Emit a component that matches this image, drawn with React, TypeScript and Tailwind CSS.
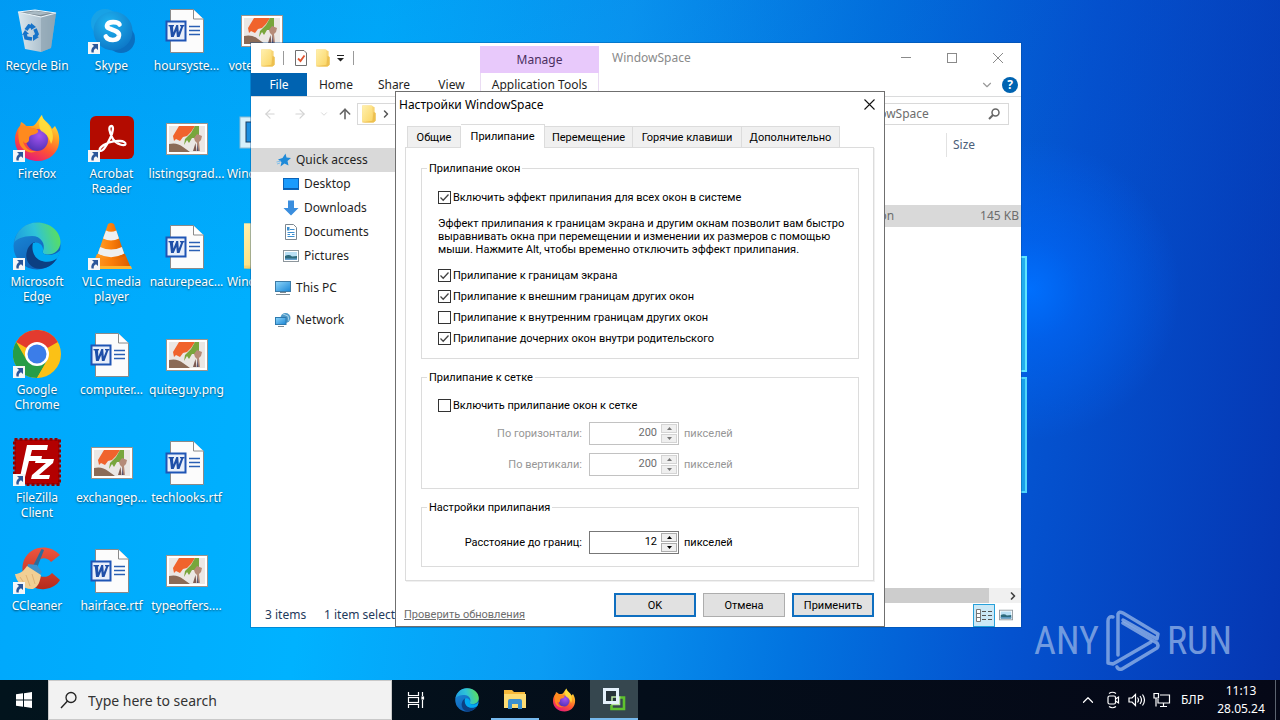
import { useState, type ReactNode } from "react";
import { ChevronDown, ChevronRight, ChevronUp, ArrowLeft, ArrowRight, ArrowUp } from "lucide-react";

/* ---------- shared gradients ---------- */

function GradientDefs() {
  return (
    <svg width="0" height="0" className="absolute" aria-hidden="true">
      <defs>
        <linearGradient id="ffBody" x1="0.8" y1="0" x2="0.3" y2="1">
          <stop offset="0" stopColor="#fff04a" />
          <stop offset="0.35" stopColor="#ffa424" />
          <stop offset="0.65" stopColor="#ff5532" />
          <stop offset="1" stopColor="#e3187c" />
        </linearGradient>
        <radialGradient id="ffCore" cx="0.6" cy="0.3" r="0.8">
          <stop offset="0" stopColor="#a453f0" />
          <stop offset="1" stopColor="#4a2fb0" />
        </radialGradient>
        <linearGradient id="edgeTop" x1="0" y1="0.6" x2="1" y2="0.4">
          <stop offset="0" stopColor="#1c9de0" />
          <stop offset="0.5" stopColor="#2fc3d8" />
          <stop offset="1" stopColor="#5be05a" />
        </linearGradient>
        <linearGradient id="edgeBody" x1="0" y1="0" x2="0.6" y2="1">
          <stop offset="0" stopColor="#1b8fdc" />
          <stop offset="1" stopColor="#0f5db4" />
        </linearGradient>
        <radialGradient id="skypeFill" cx="0.4" cy="0.3" r="0.8">
          <stop offset="0" stopColor="#1fb3f0" />
          <stop offset="1" stopColor="#0b73c4" />
        </radialGradient>
        <linearGradient id="vlcFill" x1="0" y1="0" x2="1" y2="0">
          <stop offset="0" stopColor="#ffa12b" />
          <stop offset="0.5" stopColor="#fb7f0a" />
          <stop offset="1" stopColor="#d95c00" />
        </linearGradient>
        <linearGradient id="binFill" x1="0" y1="0" x2="1" y2="0">
          <stop offset="0" stopColor="#dbe7ee" />
          <stop offset="0.55" stopColor="#b4c6d2" />
          <stop offset="1" stopColor="#8fa9ba" />
        </linearGradient>
        <linearGradient id="ccFill" x1="0" y1="0" x2="0" y2="1">
          <stop offset="0" stopColor="#f0553f" />
          <stop offset="1" stopColor="#b52a1c" />
        </linearGradient>
        <linearGradient id="folderFill" x1="0" y1="0" x2="1" y2="1">
          <stop offset="0" stopColor="#fff0ae" />
          <stop offset="1" stopColor="#fbd768" />
        </linearGradient>
        <linearGradient id="screenFill" x1="0" y1="0" x2="1" y2="1">
          <stop offset="0" stopColor="#8fd6fa" />
          <stop offset="1" stopColor="#1a86d6" />
        </linearGradient>
      </defs>
    </svg>
  );
}

/* ---------- desktop icons, drawn on a 48 unit grid ---------- */

const RecycleBinIcon = () => (
  <svg viewBox="0 0 48 48" className="size-12">
    <path d="M5 6 L43 7 L38 42 L28 46 L12 43 Z" fill="url(#binFill)" />
    <path d="M28 11 L43 7 L38 42 L28 46 Z" fill="#8ea3b1" opacity="0.65" />
    <path d="M5 6 L22 4 L43 7 L28 11 Z" fill="#7e8d97" stroke="#eef6fb" strokeWidth="1.2" />
    <path d="M11 7 L22 5 L37 7 L27 9 Z" fill="#a9bac4" />
    <g fill="none" stroke="#1673c9" strokeWidth="3.6">
      <path d="M13 24 L16 20 L20 21" />
      <path d="M22 23 L24 28 L22 31" />
      <path d="M19 33 L13 32 L12 28" />
    </g>
    <path d="M18 17 L23 21 L18 24 Z M26 31 L20 35 L20 29 Z M9 29 L12 24 L16 28 Z" fill="#1673c9" />
  </svg>
);

const SkypeIcon = () => (
  <svg viewBox="0 0 48 48" className="size-12">
    <circle cx="33" cy="33" r="14" fill="#0a6fc0" />
    <circle cx="17" cy="17" r="14" fill="#18a2e6" />
    <circle cx="25" cy="25" r="19.5" fill="url(#skypeFill)" />
    <path
      d="M31.500 18.500 C30 15.500 20 14.800 19 19.500 C18.200 24.500 31.500 23 31 29.500 C30.300 35.500 20 35 17.800 30.500"
      fill="none"
      stroke="#fff"
      strokeWidth="4.600"
      strokeLinecap="round"
    />
  </svg>
);

const WordIcon = () => (
  <svg viewBox="0 0 48 48" className="size-12">
    <path d="M7.500 3.500 H30 L40.500 13.500 V46.500 H7.500 Z" fill="#fcfcfc" stroke="#8a8a8a" />
    <path d="M30.500 3.500 V13 H40.500" fill="#fff" stroke="#8a8a8a" />
    <path d="M26 20.500 H37 M26 24.500 H37 M26 28.500 H37" stroke="#2a5fb4" strokeWidth="1.300" />
    <rect x="2.500" y="14.500" width="21" height="21" fill="#1f55b5" />
    <rect x="4.500" y="16.500" width="17" height="17" fill="#e9effa" />
    <path
      d="M5.500 19 H11 V20.200 L10 20.500 L10.400 26.500 L13.300 19 H15.200 L15.800 26.500 L18.200 20.500 L17 20.200 V19 H21.500 V20.200 L20.300 20.600 L16.500 31 H13.900 L13.300 25 L10.700 31 H8 L6.800 20.600 L5.500 20.200 Z"
      fill="#1f4fa8"
    />
  </svg>
);

const PictureFileIcon = () => (
  <svg viewBox="0 0 48 48" className="size-12">
    <rect x="3.500" y="9.500" width="41" height="31" fill="#fff" stroke="#9b938c" />
    <rect x="6" y="12" width="36" height="26" fill="#ebe7e4" />
    <path d="M10 22 L13 17 L16 12 H32 L28 18 L24 22 L20 23 L17 27 L13 25 L11 27 Z" fill="#f0632c" />
    <path d="M32 12 H36 V21 L33 24 L29 24 L26 29 L24 26 L21 31 L22 25 L28 19 Z" fill="#78a63c" />
    <path d="M6 30 Q14 28 20 33 L27 38 H6 Z" fill="#8b6b57" />
    <path d="M31 24 L34 20 L39 22 L38 26 L36 28 L37 37 H35 L34 29 L32 27 Z" fill="#b58b78" />
    <path d="M30 37 L32.500 29 L33.500 37 Z" fill="#7d5a52" />
    <path d="M34 37 L34.500 29 L35.500 37 Z" fill="#49486a" />
  </svg>
);

const FirefoxIcon = ({ className = "size-12" }: { className?: string }) => (
  <svg viewBox="0 0 48 48" className={className}>
    <path
      d="M29 1 C29 6 36 8 39 15 L42 12 C45 17 47 22 46 29 C45 39 36 47 25 47 C12 47 2 38 2 26 C2 20 4 15 7 12 L8 8 C10 9 12 10 13 12 L19 12 C23 12 25 5 29 1 Z"
      fill="url(#ffBody)"
    />
    <circle cx="24" cy="26" r="11" fill="url(#ffCore)" />
    <path
      d="M7 12 C11 11 16 12 19 14 C23 14 26 16 25 18 C23 21 19 20 17 22 C15 24 17 26 15 28 C13 30 11 29 10 27 C12 36 19 38 24 37 C17 41 7 36 6 27 C5 20 5 16 7 12 Z"
      fill="#ff8a1e"
    />
    <path d="M29 1 C29 6 35 9 38 15 C41 21 40 27 38 30 C36 22 32 19 28 17 C25 12 26 5 29 1 Z" fill="#ffe03c" opacity="0.85" />
  </svg>
);

const AcrobatIcon = () => (
  <svg viewBox="0 0 48 48" className="size-12">
    <rect x="2" y="2" width="44" height="43" rx="6" fill="#b30b00" />
    <path
      d="M23.500 12 C20 12 21 18 25 25 C28 30 37 33 37.500 30 C38 26.500 28 26 21 28.500 C14 31 10.500 35 12 36.500 C14.500 38.500 19 31 22.500 23.500 C25 18 26 12 23.500 12 Z"
      fill="none"
      stroke="#fff"
      strokeWidth="2.300"
      strokeLinejoin="round"
    />
  </svg>
);

const EdgeIcon = ({ className = "size-12" }: { className?: string }) => (
  <svg viewBox="0 0 48 48" className={className}>
    <circle cx="24" cy="24" r="23.500" fill="url(#edgeBody)" />
    <path
      d="M1 21 C3 8 13 0.500 24 0.500 C38 0.500 47.500 10 47.500 20 C47.500 28 41 32.500 35 32.500 C31 32.500 29 31 30 29 C33 22 28 14 19 14 C10 14 3 17 1 21 Z"
      fill="url(#edgeTop)"
    />
    <path
      d="M44 36.500 C39 45 29 48.500 22 46 C14 43 12 35 14 29 C15 25 18 21 22 20 C18 27 21 39 33 39.500 C38 39.500 41 38 44 36.500 Z"
      fill="#0c3f82"
    />
    <path d="M20 21 C18 28 21 38 31 39.500 C37 40.300 41 38.500 44.500 36 C46 33 47 31 47.300 28 C44 32 39 33.500 34 33 C29 32 29.500 30 30 28 C30.500 23 25 19 20 21 Z" fill="#00a9f2" />
  </svg>
);

const VlcIcon = () => (
  <svg viewBox="0 0 48 48" className="size-12">
    <path d="M9 32 H37 L43 46 H3 Z" fill="url(#vlcFill)" />
    <path d="M3 44 H43 L44 47 H3 Z" fill="#ffb52e" />
    <path d="M20 2 Q23 0 26 2 L37 34 Q23 41 9 34 Z" fill="url(#vlcFill)" />
    <path d="M18 8.500 Q23 11 28.300 8.500 L31 16.500 Q23 20.500 15 16.500 Z" fill="#eef0f1" />
    <path d="M12.200 25 Q23 30 33.900 25 L36.200 31.500 Q23 39 9.900 31.500 Z" fill="#eef0f1" />
  </svg>
);

const ChromeIcon = () => (
  <svg viewBox="0 0 48 48" className="size-12">
    <circle cx="24" cy="24" r="24" fill="#fbc116" />
    <path d="M24 24 L3.200 12 A24 24 0 0 1 44.800 12 Z" fill="#e33b2e" />
    <path d="M3.200 12 A24 24 0 0 0 24 48 L34.400 30 L24 24 L13.600 30 Z" fill="#269d47" />
    <path d="M24 48 L34.400 30 L40 24 A24 24 0 0 1 24 48 Z" fill="#fbc116" />
    <circle cx="24" cy="24" r="12" fill="#fff" />
    <circle cx="24" cy="24" r="9.500" fill="#3b7de9" />
  </svg>
);

const FileZillaIcon = () => (
  <svg viewBox="0 0 48 48" className="size-12">
    <rect x="1.500" y="1.500" width="45" height="45" fill="#b30000" stroke="#8e0000" strokeWidth="3" strokeDasharray="3 2" />
    <path d="M14 7 H35 L34 12 H19 L17.500 18 H29 L28 23 H16 L12 39 H7 Z" fill="#fff" />
    <path d="M23 21 H41 L40 25 L26 37 H37 L36 41 H18 L19 37 L33 25 H22 Z" fill="#fff" />
  </svg>
);

const CCleanerIcon = () => (
  <svg viewBox="0 0 48 48" className="size-12">
    <path d="M47 9 C36 -3 17 0 11 14 C5 30 17 45 32 43 C39 42 44 39 47 34 L39 27 C33 34 22 31 22 22 C22 12 33 9 38 16 Z" fill="url(#ccFill)" />
    <path d="M28.500 3 L31 4 L24 22 L20 20 Z" fill="#2c6c9c" />
    <path d="M15 18 L24 19 L29 26 L26 30 L14 22 Z" fill="#3f92cc" />
    <path d="M14 20 C10 26 6 28 2 28 C3 35 10 44 20 43 C25 41 27 36 28 29 Z" fill="#f2cf94" />
    <path d="M7 31 L11 37 M13 29 L17 40 M19 28 L22 38" stroke="#dfb274" fill="none" />
  </svg>
);

const ProgramIcon = () => (
  <svg viewBox="0 0 48 48" className="size-12">
    <rect x="2" y="3" width="44" height="31" fill="#d5f0fb" stroke="#8bb9cf" />
    <rect x="8" y="8" width="32" height="20" fill="#1c8fe0" stroke="#1b3e63" />
  </svg>
);

const FolderIcon = ({ className = "size-12" }: { className?: string }) => (
  <svg viewBox="0 0 16 16" className={className}>
    <path d="M2 0.500 H10 L13 2 V14.500 L12 15.500 H2 Z" fill="#f7d474" />
    <path d="M2 0.500 H11 V14.500 H2 Z" fill="url(#folderFill)" />
    <path d="M12 6 L14 7 V14 L12 15.500 H2 L11 14 Z" fill="#edc04f" />
  </svg>
);

function ShortcutBadge() {
  return (
    <svg viewBox="0 0 12 12" className="absolute bottom-0 left-0 size-3">
      <rect width="12" height="12" fill="#f4f6f8" />
      <path d="M4 2 H10 V8 L8 6.300 C6 7.300 5.500 8.500 5.800 10.500 H3.500 C2.800 7.500 4 5.500 6 4 Z" fill="#2b579a" />
    </svg>
  );
}

type DesktopItem = { label: string; icon: ReactNode; shortcut?: boolean } | null;

const desktopItems: DesktopItem[] = [
  { label: "Recycle Bin", icon: <RecycleBinIcon /> },
  { label: "Skype", icon: <SkypeIcon />, shortcut: true },
  { label: "hoursyste...", icon: <WordIcon /> },
  { label: "voteguest...", icon: <PictureFileIcon /> },
  { label: "Firefox", icon: <FirefoxIcon />, shortcut: true },
  { label: "Acrobat Reader", icon: <AcrobatIcon />, shortcut: true },
  { label: "listingsgrad...", icon: <PictureFileIcon /> },
  { label: "WindowSp...", icon: <ProgramIcon /> },
  { label: "Microsoft Edge", icon: <EdgeIcon />, shortcut: true },
  { label: "VLC media player", icon: <VlcIcon />, shortcut: true },
  { label: "naturepeac...", icon: <WordIcon /> },
  { label: "WindowSp...", icon: <FolderIcon /> },
  { label: "Google Chrome", icon: <ChromeIcon />, shortcut: true },
  { label: "computer...", icon: <WordIcon /> },
  { label: "quiteguy.png", icon: <PictureFileIcon /> },
  null,
  { label: "FileZilla Client", icon: <FileZillaIcon />, shortcut: true },
  { label: "exchangep...", icon: <PictureFileIcon /> },
  { label: "techlooks.rtf", icon: <WordIcon /> },
  null,
  { label: "CCleaner", icon: <CCleanerIcon />, shortcut: true },
  { label: "hairface.rtf", icon: <WordIcon /> },
  { label: "typeoffers....", icon: <PictureFileIcon /> },
  null,
];

function DesktopIcons() {
  return (
    <ul className="grid w-max auto-rows-[108px] grid-cols-[74px_75px_75px_75px] pt-1.5">
      {desktopItems.map((item, i) =>
        item ? (
          <li key={i} className="flex flex-col items-center gap-1 text-center">
            <div className="relative">
              {item.icon}
              {item.shortcut && <ShortcutBadge />}
            </div>
            <span className="px-0.5 text-[12px] leading-[15px] text-white [text-shadow:0_1px_2px_rgba(0,0,0,0.6)]">
              {item.label}
            </span>
          </li>
        ) : (
          <li key={i} aria-hidden="true" />
        ),
      )}
    </ul>
  );
}

/* ---------- Explorer window ---------- */

const DocCheckIcon = () => (
  <svg viewBox="0 0 14 16" className="h-4 w-3.5">
    <path d="M1.500 0.500 H10 L12.500 3 V15.500 H1.500 Z" fill="#fff" stroke="#6f6f6f" />
    <path d="M4 8.500 L6.500 11 L10.500 5.500" fill="none" stroke="#e0532e" strokeWidth="1.800" />
  </svg>
);

const StarIcon = () => (
  <svg viewBox="0 0 16 16" className="size-4">
    <path d="M9.500 1.500 L10.500 5.500 L15 6 L11.500 9 L12.500 13.500 L8.500 11.500 L4.500 14.500 L5.500 10 L2 7.500 L6.500 6 Z" fill="#1f8ad8" />
    <path d="M0.500 10 L5 9 M1 12 L4 11" stroke="#7dbdea" />
  </svg>
);
const DesktopSmallIcon = () => (
  <svg viewBox="0 0 16 16" className="size-4">
    <rect x="0.500" y="2.500" width="15" height="11" fill="#1a9bfc" stroke="#0b63b8" />
    <path d="M1 12.500 H15" stroke="#0a5cad" />
  </svg>
);
const DownloadsIcon = () => (
  <svg viewBox="0 0 16 16" className="size-4">
    <path d="M5 0.500 H11 V8 H15.500 L8 15.500 L0.500 8 H5 Z" fill="#3b8ede" />
  </svg>
);
const DocumentsIcon = () => (
  <svg viewBox="0 0 16 16" className="size-4">
    <path d="M2.500 0.500 H10.500 L13.500 3.500 V15.500 H2.500 Z" fill="#fff" stroke="#7c8790" />
    <path d="M7 5.500 H11.500 M4.500 8.500 H11.500 M4.500 10.500 H7 M9 10.500 H11.500 M4.500 12.500 H11.500" stroke="#3d8fd0" />
    <rect x="4" y="3" width="2.500" height="3.500" fill="#3d8fd0" />
  </svg>
);
const PicturesIcon = ({ className = "size-4" }: { className?: string }) => (
  <svg viewBox="0 0 16 16" className={className}>
    <rect x="0.500" y="2.500" width="15" height="11" fill="#fff" stroke="#8d969c" />
    <rect x="2" y="4" width="12" height="8" fill="#b9dff4" />
    <path d="M2 8 Q6 6 9 8.500 L14 8 V12 H2 Z" fill="#2d6a7c" />
    <path d="M2 10.500 H14 V12 H2 Z" fill="#64a0cf" />
  </svg>
);
const ThisPcIcon = () => (
  <svg viewBox="0 0 16 16" className="size-4">
    <rect x="0.500" y="1.500" width="15" height="10" fill="url(#screenFill)" stroke="#3d7ba6" />
    <path d="M5 12.500 H11 M1 14.500 H15" stroke="#7d8b94" />
  </svg>
);
const NetworkIcon = () => (
  <svg viewBox="0 0 16 16" className="size-4">
    <circle cx="10.500" cy="6" r="5" fill="#4f9ac8" />
    <path d="M8 2 L13 4 L14 9" fill="none" stroke="#a9d3ea" />
    <rect x="0.500" y="5.500" width="10.500" height="7" fill="url(#screenFill)" stroke="#2d79ae" />
    <path d="M3 14.500 H9" stroke="#7d8b94" />
  </svg>
);

const quickAccess = [
  { label: "Desktop", icon: <DesktopSmallIcon /> },
  { label: "Downloads", icon: <DownloadsIcon /> },
  { label: "Documents", icon: <DocumentsIcon /> },
  { label: "Pictures", icon: <PicturesIcon /> },
];

const windowButton = "flex h-[30px] w-[46px] items-center justify-center text-[#8a8a8a]";

function ExplorerTitle() {
  return (
    <div className="grid grid-cols-[229px_119px_1fr]">
      <div className="flex h-[30px] items-center pl-2">
        <FolderIcon className="size-[18px]" />
        <span className="ml-1.5 h-3.5 w-px bg-[#9a9a9a]" />
        <button className="ml-2.5" aria-label="Properties">
          <DocCheckIcon />
        </button>
        <button className="ml-1.5" aria-label="New folder">
          <FolderIcon className="size-[18px]" />
        </button>
        <button className="ml-1" aria-label="Customize toolbar">
          <svg viewBox="0 0 9 7" className="h-[7px] w-[9px]">
            <path d="M1 0.500 H8" stroke="#222" />
            <path d="M1 3 H8 L4.500 6.500 Z" fill="#222" />
          </svg>
        </button>
        <span className="ml-2 h-3.5 w-px bg-[#9a9a9a]" />
      </div>
      <div className="mt-[3px] flex items-center justify-center bg-[#e8c9fb] text-[#4b2f5f]">Manage</div>
      <div className="flex items-center">
        <span className="flex-1 pl-[13px] text-[#8a8a8a]">WindowSpace</span>
        <button className={windowButton} aria-label="Minimize">
          <svg viewBox="0 0 10 10" className="size-2.5">
            <path d="M0 4.500 H10" stroke="currentColor" />
          </svg>
        </button>
        <button className={windowButton} aria-label="Maximize">
          <svg viewBox="0 0 10 10" className="size-2.5">
            <rect x="0.500" y="0.500" width="9" height="9" fill="none" stroke="currentColor" />
          </svg>
        </button>
        <button className={windowButton} aria-label="Close window">
          <svg viewBox="0 0 10 10" className="size-2.5">
            <path d="M0 0 L10 10 M10 0 L0 10" stroke="currentColor" />
          </svg>
        </button>
      </div>
    </div>
  );
}

function ExplorerWindow() {
  return (
    <section
      aria-label="WindowSpace folder"
      className="absolute top-[43px] left-[251px] flex h-[584px] w-[770px] flex-col bg-white text-[12px] leading-4 text-[#1f1f1f] shadow-[0_0_0_1px_rgba(0,70,140,0.35)]"
    >
      <ExplorerTitle />
      <div className="flex h-6 items-stretch border-b border-[#dadbdc]">
        <button className="w-14 bg-[#0063b1] text-white">File</button>
        <button className="w-[58px]">Home</button>
        <button className="w-[58px]">Share</button>
        <button className="w-[57px]">View</button>
        <button className="w-[119px] border-x border-[#eadcf3]">Application Tools</button>
        <div className="flex flex-1 items-center justify-end gap-2 pr-[3px]">
          <ChevronDown className="size-3.5 text-[#9a9a9a]" strokeWidth={2} />
          <button className="size-4 rounded-full bg-[#0063b1] text-[12px] leading-4 font-bold text-white" aria-label="Help">
            ?
          </button>
        </div>
      </div>

      <div className="flex h-[34px] items-center pr-3">
        <div className="flex w-[106px] items-center pl-3 text-[#d3d3d3]">
          <ArrowLeft className="size-3.5" />
          <ArrowRight className="ml-4 size-3.5" />
          <ChevronDown className="ml-3 size-2.5" />
          <ArrowUp className="ml-2 size-4 text-[#666]" strokeWidth={2.4} />
        </div>
        <div className="flex h-[22px] flex-1 items-center border border-[#d9d9d9] pl-0.5">
          <FolderIcon className="size-[18px]" />
          <ChevronRight className="ml-0.5 size-3 text-[#555]" strokeWidth={3} />
        </div>
        <label className="ml-3 flex h-[22px] w-[207px] items-center border border-[#d9d9d9] pr-2">
          <input
            aria-label="Search WindowSpace"
            placeholder="Search WindowSpace"
            className="min-w-0 flex-1 pl-1.5 outline-none placeholder:text-[#6d6d6d]"
          />
          <svg viewBox="0 0 12 12" className="size-3 text-[#666]">
            <circle cx="7.500" cy="4.500" r="3.500" fill="none" stroke="currentColor" strokeWidth="1.500" />
            <path d="M5 7 L1 11" stroke="currentColor" strokeWidth="2" />
          </svg>
        </label>
      </div>

      <div className="flex min-h-0 flex-1">
        <nav className="w-36 pt-[17px]" aria-label="Folders">
          <a href="#quick" className="flex h-6 items-center gap-1 bg-[#d9d9d9] pl-[25px]">
            <StarIcon />
            Quick access
          </a>
          {quickAccess.map((entry) => (
            <a key={entry.label} href={`#${entry.label}`} className="flex h-6 items-center gap-[5px] pl-8">
              {entry.icon}
              {entry.label}
            </a>
          ))}
          <a href="#pc" className="mt-2 flex h-6 items-center gap-[5px] pl-6">
            <ThisPcIcon />
            This PC
          </a>
          <a href="#network" className="mt-2 flex h-6 items-center gap-[5px] pl-6">
            <NetworkIcon />
            Network
          </a>
        </nav>

        <div className="flex flex-1 flex-col">
          <table className="w-full table-fixed border-collapse text-[#6d6d6d]">
            <colgroup>
              <col />
              <col className="w-[120px]" />
              <col className="w-[75px]" />
            </colgroup>
            <thead>
              <tr className="h-[30px] text-left align-top text-[#4c607a]">
                <th />
                <th />
                <th className="pt-0.5 font-normal">
                  <div className="flex h-6 items-center border-l border-[#e2e2e2] pl-1.5">Size</div>
                </th>
              </tr>
            </thead>
            <tbody>
              <tr className="h-[22px]">
                <td colSpan={3} />
              </tr>
              <tr className="h-[22px]">
                <td colSpan={3} />
              </tr>
              <tr className="h-[22px] bg-[#d9d9d9]">
                <td />
                <td className="pl-[5px]">Application</td>
                <td className="pr-0.5 text-right">145 KB</td>
              </tr>
            </tbody>
          </table>
          <div className="mt-auto flex h-[15px] items-center bg-[#f0f0f0]">
            <div className="h-full flex-1 bg-[#cdcdcd]" />
            <button className="flex h-full w-8 items-center justify-end pr-0.5" aria-label="Scroll right">
              <ChevronRight className="size-3 text-[#404040]" strokeWidth={3.5} />
            </button>
          </div>
        </div>
      </div>

      <footer className="flex h-6 items-center text-[#1e395b]">
        <span className="w-[73px] pl-3.5">3 items</span>
        <span className="flex-1">1 item selected</span>
        <button className="flex h-[23px] w-[22px] items-center justify-center border border-[#26a0da] bg-[#cbe8f6]" aria-label="Details">
          <svg viewBox="0 0 16 13" className="h-[13px] w-4">
            <path d="M0.500 0.500 H4.500 V12.500 H0.500 Z M0.500 4.500 H4.500 M0.500 8.500 H4.500" fill="#fff" stroke="#777" />
            <path d="M6 2.500 H10 M12 2.500 H16 M6 6.500 H10 M12 6.500 H16 M6 10.500 H10 M12 10.500 H16" stroke="#555" />
          </svg>
        </button>
        <button className="flex h-[23px] w-[26px] items-center pl-1" aria-label="Large icons">
          <PicturesIcon className="size-3.5" />
        </button>
      </footer>
    </section>
  );
}

/* ---------- settings dialog ---------- */

const dialogTabs = [
  { label: "Общие", width: "w-[54px]" },
  { label: "Прилипание", width: "w-[84px]" },
  { label: "Перемещение", width: "w-[88px]" },
  { label: "Горячие клавиши", width: "w-[109px]" },
  { label: "Дополнительно", width: "w-[98px]" },
];

function Check({ label, initial = false }: { label: string; initial?: boolean }) {
  const [checked, setChecked] = useState(initial);
  return (
    <label className="flex h-[13px] w-max items-center gap-0.5">
      <span className="grid size-[13px]">
        <input
          type="checkbox"
          checked={checked}
          onChange={(e) => setChecked(e.target.checked)}
          className="col-start-1 row-start-1 size-[13px] appearance-none border border-[#333] bg-white"
        />
        {checked && (
          <svg viewBox="0 0 13 13" className="pointer-events-none col-start-1 row-start-1 size-[13px]">
            <path d="M2.500 6.500 L5.200 9.200 L10.500 3.500" fill="none" stroke="#444" strokeWidth="1.300" />
          </svg>
        )}
      </span>
      {label}
    </label>
  );
}

function NumberRow({ id, label, initial, disabled = false }: { id: string; label: string; initial: number; disabled?: boolean }) {
  const [value, setValue] = useState(initial);
  const box = disabled ? "border-[#c2c2c2] text-[#6d6d6d]" : "border-[#777] text-black";
  const step = disabled ? "border-[#d4d4d4] text-[#777]" : "border-[#adadad] text-black";
  return (
    <div className={`grid grid-cols-[159px_90px_1fr] items-center ${disabled ? "text-[#969696]" : ""}`}>
      <label htmlFor={id} className="pr-[7px] text-right">
        {label}
      </label>
      <div className={`flex h-[23px] border bg-white ${box}`}>
        <input
          id={id}
          value={value}
          disabled={disabled}
          onChange={(e) => setValue(Number(e.target.value) || 0)}
          className="min-w-0 flex-1 pr-1 pb-0.5 text-right outline-none"
        />
        <div className="flex w-[17px] flex-col gap-px bg-white py-px pr-px">
          <button disabled={disabled} onClick={() => setValue(value + 1)} aria-label="Больше" className={`flex flex-1 items-center justify-center border bg-[#efefef] ${step}`}>
            <svg viewBox="0 0 5 3" className="h-[3px] w-[5px]">
              <path d="M0 3 L2.500 0 L5 3 Z" fill="currentColor" />
            </svg>
          </button>
          <button disabled={disabled} onClick={() => setValue(value - 1)} aria-label="Меньше" className={`flex flex-1 items-center justify-center border bg-[#efefef] ${step}`}>
            <svg viewBox="0 0 5 3" className="h-[3px] w-[5px]">
              <path d="M0 0 L2.500 3 L5 0 Z" fill="currentColor" />
            </svg>
          </button>
        </div>
      </div>
      <span className="pl-[5px]">пикселей</span>
    </div>
  );
}

function Group({ title, className, children }: { title: string; className: string; children: ReactNode }) {
  return (
    <fieldset className={`border border-[#dcdcdc] pl-4 ${className}`}>
      <legend className="-ml-[11px] h-[15px] px-0.5 leading-4">{title}</legend>
      {children}
    </fieldset>
  );
}

const dialogButton = "h-6 w-[82px] bg-[#e1e1e1]";

function SettingsDialog() {
  const [active, setActive] = useState(1);
  return (
    <section
      role="dialog"
      aria-label="Настройки WindowSpace"
      className="absolute top-[91px] left-[395px] w-[490px] border border-[#6f6f6f] bg-white font-['Roboto','Noto_Sans',sans-serif] text-[11px] leading-[13px] text-black"
    >
      <header className="flex h-6 items-center justify-between pl-[3px]">
        <h1 className="font-['Noto_Sans','Open_Sans',sans-serif] text-[12px]">Настройки WindowSpace</h1>
        <button className="flex h-full w-[30px] items-center justify-center" aria-label="Закрыть">
          <svg viewBox="0 0 11 11" className="size-[11px]">
            <path d="M0.500 0.500 L10.500 10.500 M10.500 0.500 L0.500 10.500" stroke="#111" strokeWidth="1.100" />
          </svg>
        </button>
      </header>

      <div className="pr-2.5 pl-[9px]">
        <div role="tablist" className="flex items-end pt-2 pl-0.5">
          {dialogTabs.map((tab, i) => (
            <button
              key={tab.label}
              role="tab"
              aria-selected={i === active}
              onClick={() => setActive(i)}
              className={`${tab.width} border-t border-r border-[#dcdcdc] ${
                i === active ? "-mb-px h-6 bg-white" : "h-[21px] bg-[#f0f0f0] pt-px first:border-l"
              }`}
            >
              {tab.label}
            </button>
          ))}
        </div>
        <div role="tabpanel" className="border border-[#dcdcdc] pt-[13px] pr-3.5 pb-[13px] pl-[15px] shadow-[1px_1px_0_#f0f0f0]">
          <Group title="Прилипание окон" className="h-[198px]">
            <div className="flex flex-col gap-2 pt-[15px]">
              <Check label="Включить эффект прилипания для всех окон в системе" initial />
              <p className="my-[5px]">
                Эффект прилипания к границам экрана и другим окнам позволит вам быстро
                <br />
                выравнивать окна при перемещении и изменении их размеров с помощью
                <br />
                мыши. Нажмите Alt, чтобы временно отключить эффект прилипания.
              </p>
              <Check label="Прилипание к границам экрана" initial />
              <Check label="Прилипание к внешним границам других окон" initial />
              <Check label="Прилипание к внутренним границам других окон" />
              <Check label="Прилипание дочерних окон внутри родительского" initial />
            </div>
          </Group>
          <Group title="Прилипание к сетке" className="mt-[11px] h-[119px]">
            <div className="flex flex-col gap-2 pt-3.5">
              <Check label="Включить прилипание окон к сетке" />
              <div className="-ml-2 flex flex-col gap-2 pt-0.5">
                <NumberRow id="grid-x" label="По горизонтали:" initial={200} disabled />
                <NumberRow id="grid-y" label="По вертикали:" initial={200} disabled />
              </div>
            </div>
          </Group>
          <Group title="Настройки прилипания" className="mt-[11px] h-[67px]">
            <div className="-ml-2 pt-4">
              <NumberRow id="distance" label="Расстояние до границ:" initial={12} />
            </div>
          </Group>
        </div>
      </div>

      <footer className="flex items-end gap-[7px] pt-3 pr-2.5 pb-[9px] pl-2">
        <a href="#updates" className="mr-auto -mb-1 text-[#6d6d6d] underline">
          Проверить обновления
        </a>
        <button className={`${dialogButton} border-2 border-[#0f6fc0]`}>OK</button>
        <button className={`${dialogButton} border border-[#adadad]`}>Отмена</button>
        <button className={`${dialogButton} border-2 border-[#0f6fc0]`}>Применить</button>
      </footer>
    </section>
  );
}

/* ---------- wallpaper details ---------- */

function Watermark() {
  return (
    <div className="absolute right-12 bottom-2 flex items-center gap-1.5 font-['Liberation_Sans_Narrow','Roboto_Condensed','Roboto',sans-serif] text-[38px] leading-none text-[#8fb0e6]/80">
      <span>ANY</span>
      <svg viewBox="0 0 56 62" className="h-[62px] w-14" fill="none" stroke="currentColor" strokeWidth="3.500" strokeLinejoin="round" strokeLinecap="round">
        <path d="M8 7 Q3 6 3 11 V53 L8 54 L46 32" />
        <path d="M13 45 V4 Q14 1 18 3 L53 24 L52 29 L18 10" />
        <path d="M12 57 Q13 60 17 59 L52 38 Q54 36 52 33 L18 13" />
      </svg>
      <span>RUN</span>
    </div>
  );
}

/* ---------- taskbar ---------- */

const ExplorerTaskIcon = () => (
  <svg viewBox="0 0 24 24" className="size-6">
    <path d="M1 3 H9 L11 5 H22 V21 H1 Z" fill="#f6b93b" />
    <path d="M1 7 H23 V21 H1 Z" fill="#fddc73" />
    <path d="M5 22 V14 Q5 12 7 12 H17 Q19 12 19 14 V22 H15 V17 H9 V22 Z" fill="#3a8fd0" />
  </svg>
);

const WindowSpaceTaskIcon = () => (
  <svg viewBox="0 0 24 24" className="size-6">
    <path d="M18 10.500 H22 V22 H9.500 V18" fill="none" stroke="#5fc22e" strokeWidth="2.600" />
    <rect x="2.500" y="2.500" width="13" height="13" fill="#26333a" stroke="#e4f1fb" strokeWidth="3" />
    <path d="M10 10 H17.500 V17.500 H10 Z" fill="#26333a" stroke="#b9e6a2" strokeWidth="1.500" />
    <path d="M15.500 9 V15.500 H9" fill="none" stroke="#e4f1fb" strokeWidth="3" />
  </svg>
);

function Taskbar() {
  return (
    <footer className="flex h-10 shrink-0 items-stretch bg-linear-to-r from-[#02141d] to-[#050817] text-white">
      <button className="flex w-12 items-center justify-center" aria-label="Start">
        <svg viewBox="0 0 16 16" className="size-4">
          <path d="M0 2.300 L7 1.300 V7.500 H0 Z M8 1.200 L16 0 V7.500 H8 Z M0 8.500 H7 V14.700 L0 13.700 Z M8 8.500 H16 V16 L8 14.800 Z" fill="#fff" />
        </svg>
      </button>
      <label className="flex w-[344px] items-center gap-2.5 border border-[#c9c9c9] bg-[#f2f2f2] pl-[11px] text-[#333]">
        <svg viewBox="0 0 18 18" className="size-[18px]">
          <circle cx="11" cy="6.500" r="5" fill="none" stroke="#222" strokeWidth="1.300" />
          <path d="M7.500 10 L1 17" stroke="#222" strokeWidth="1.400" />
        </svg>
        <input aria-label="Search" placeholder="Type here to search" className="min-w-0 flex-1 text-[14px] outline-none placeholder:text-[#333]" />
      </label>
      <button className="flex w-12 items-center justify-center" aria-label="Task view">
        <svg viewBox="0 0 18 16" className="h-4 w-[18px]" fill="none" stroke="#fff" strokeWidth="1.200">
          <path d="M1.500 0 V3.500 H11.500 V0 M1.500 16 V12.500 H11.500 V16" />
          <rect x="1.500" y="5.500" width="10" height="5" />
          <path d="M15.500 0 V4 M15.500 8 V16" />
          <rect x="15" y="5" width="1.500" height="2" fill="#fff" />
        </svg>
      </button>
      <button className="ml-[3px] flex w-12 items-center justify-center" aria-label="Microsoft Edge">
        <EdgeIcon className="size-6" />
      </button>
      <button className="flex w-12 items-center justify-center border-b-2 border-[#76b9ed]" aria-label="File Explorer">
        <ExplorerTaskIcon />
      </button>
      <button className="ml-px flex w-12 items-center justify-center" aria-label="Firefox">
        <FirefoxIcon className="size-6" />
      </button>
      <button className="ml-0.5 flex w-12 items-center justify-center border-b-2 border-[#76b9ed] bg-[#36474f]" aria-label="WindowSpace">
        <WindowSpaceTaskIcon />
      </button>

      <div className="ml-auto flex items-center text-[12px]">
        <ChevronUp className="size-[18px]" strokeWidth={1.6} />
        <svg viewBox="0 0 16 18" className="ml-2 h-[18px] w-4" fill="none" stroke="#fff" strokeWidth="1.200">
          <rect x="3" y="5" width="7.500" height="8" rx="1.500" />
          <path d="M10.500 8 L13.500 6 V12 L10.500 10 M4 2.500 Q7.500 0 11 2.500 M4 15.500 Q7.500 18 11 15.500" />
        </svg>
        <svg viewBox="0 0 18 16" className="ml-[7px] h-4 w-[18px]" fill="none" stroke="#fff" strokeWidth="1.200">
          <path d="M1 6 H4 L7.500 2.500 V13.500 L4 10 H1 Z M9.500 5.500 Q11.500 8 9.500 10.500 M12 4 Q15 8 12 12 M14.500 2.500 Q18.500 8 14.500 13.500" />
        </svg>
        <svg viewBox="0 0 18 16" className="ml-[7px] h-4 w-[18px]" fill="none" stroke="#fff" strokeWidth="1.200">
          <path d="M7 3 H16.500 V11 H5 V7 M10.500 11 V14 M7 14.500 H14" />
          <path d="M1 1.500 H5.500 V6 H1 Z M3 6 V14.500" />
        </svg>
        <span className="ml-2.5">БЛР</span>
        <time className="mr-px ml-1 w-[66px] text-center leading-[18px]">
          11:13
          <br />
          28.05.24
        </time>
        <span className="mr-1 h-10 w-px bg-[#5c6470]" />
      </div>
    </footer>
  );
}

export default function App() {
  return (
    <div className="flex h-screen flex-col overflow-hidden bg-[#00a8fb] font-['Noto_Sans','Open_Sans',sans-serif]">
      <GradientDefs />
      <main className="relative flex-1 overflow-hidden bg-[radial-gradient(circle_at_1030px_290px,rgba(0,112,255,0.95)_0,rgba(0,104,250,0.6)_50px,rgba(0,90,230,0)_150px),linear-gradient(to_bottom,rgba(0,70,190,0.12),rgba(0,70,190,0)_45%),linear-gradient(98deg,#00a6fb_0%,#00b2ff_28%,#0a9cf4_46%,#0274e0_64%,#0452cf_80%,#0536b2_100%)]">
        <DesktopIcons />
        <div className="absolute top-[256px] left-[979px] flex flex-col gap-[5px]">
          <div className="h-[116px] w-12 border-2 border-[#5fe6ff] bg-[#22aeee]" />
          <div className="h-[116px] w-12 border-2 border-[#4fd6fb] bg-[#18a0ea]" />
        </div>
        <Watermark />
        <ExplorerWindow />
        <SettingsDialog />
      </main>
      <Taskbar />
    </div>
  );
}
